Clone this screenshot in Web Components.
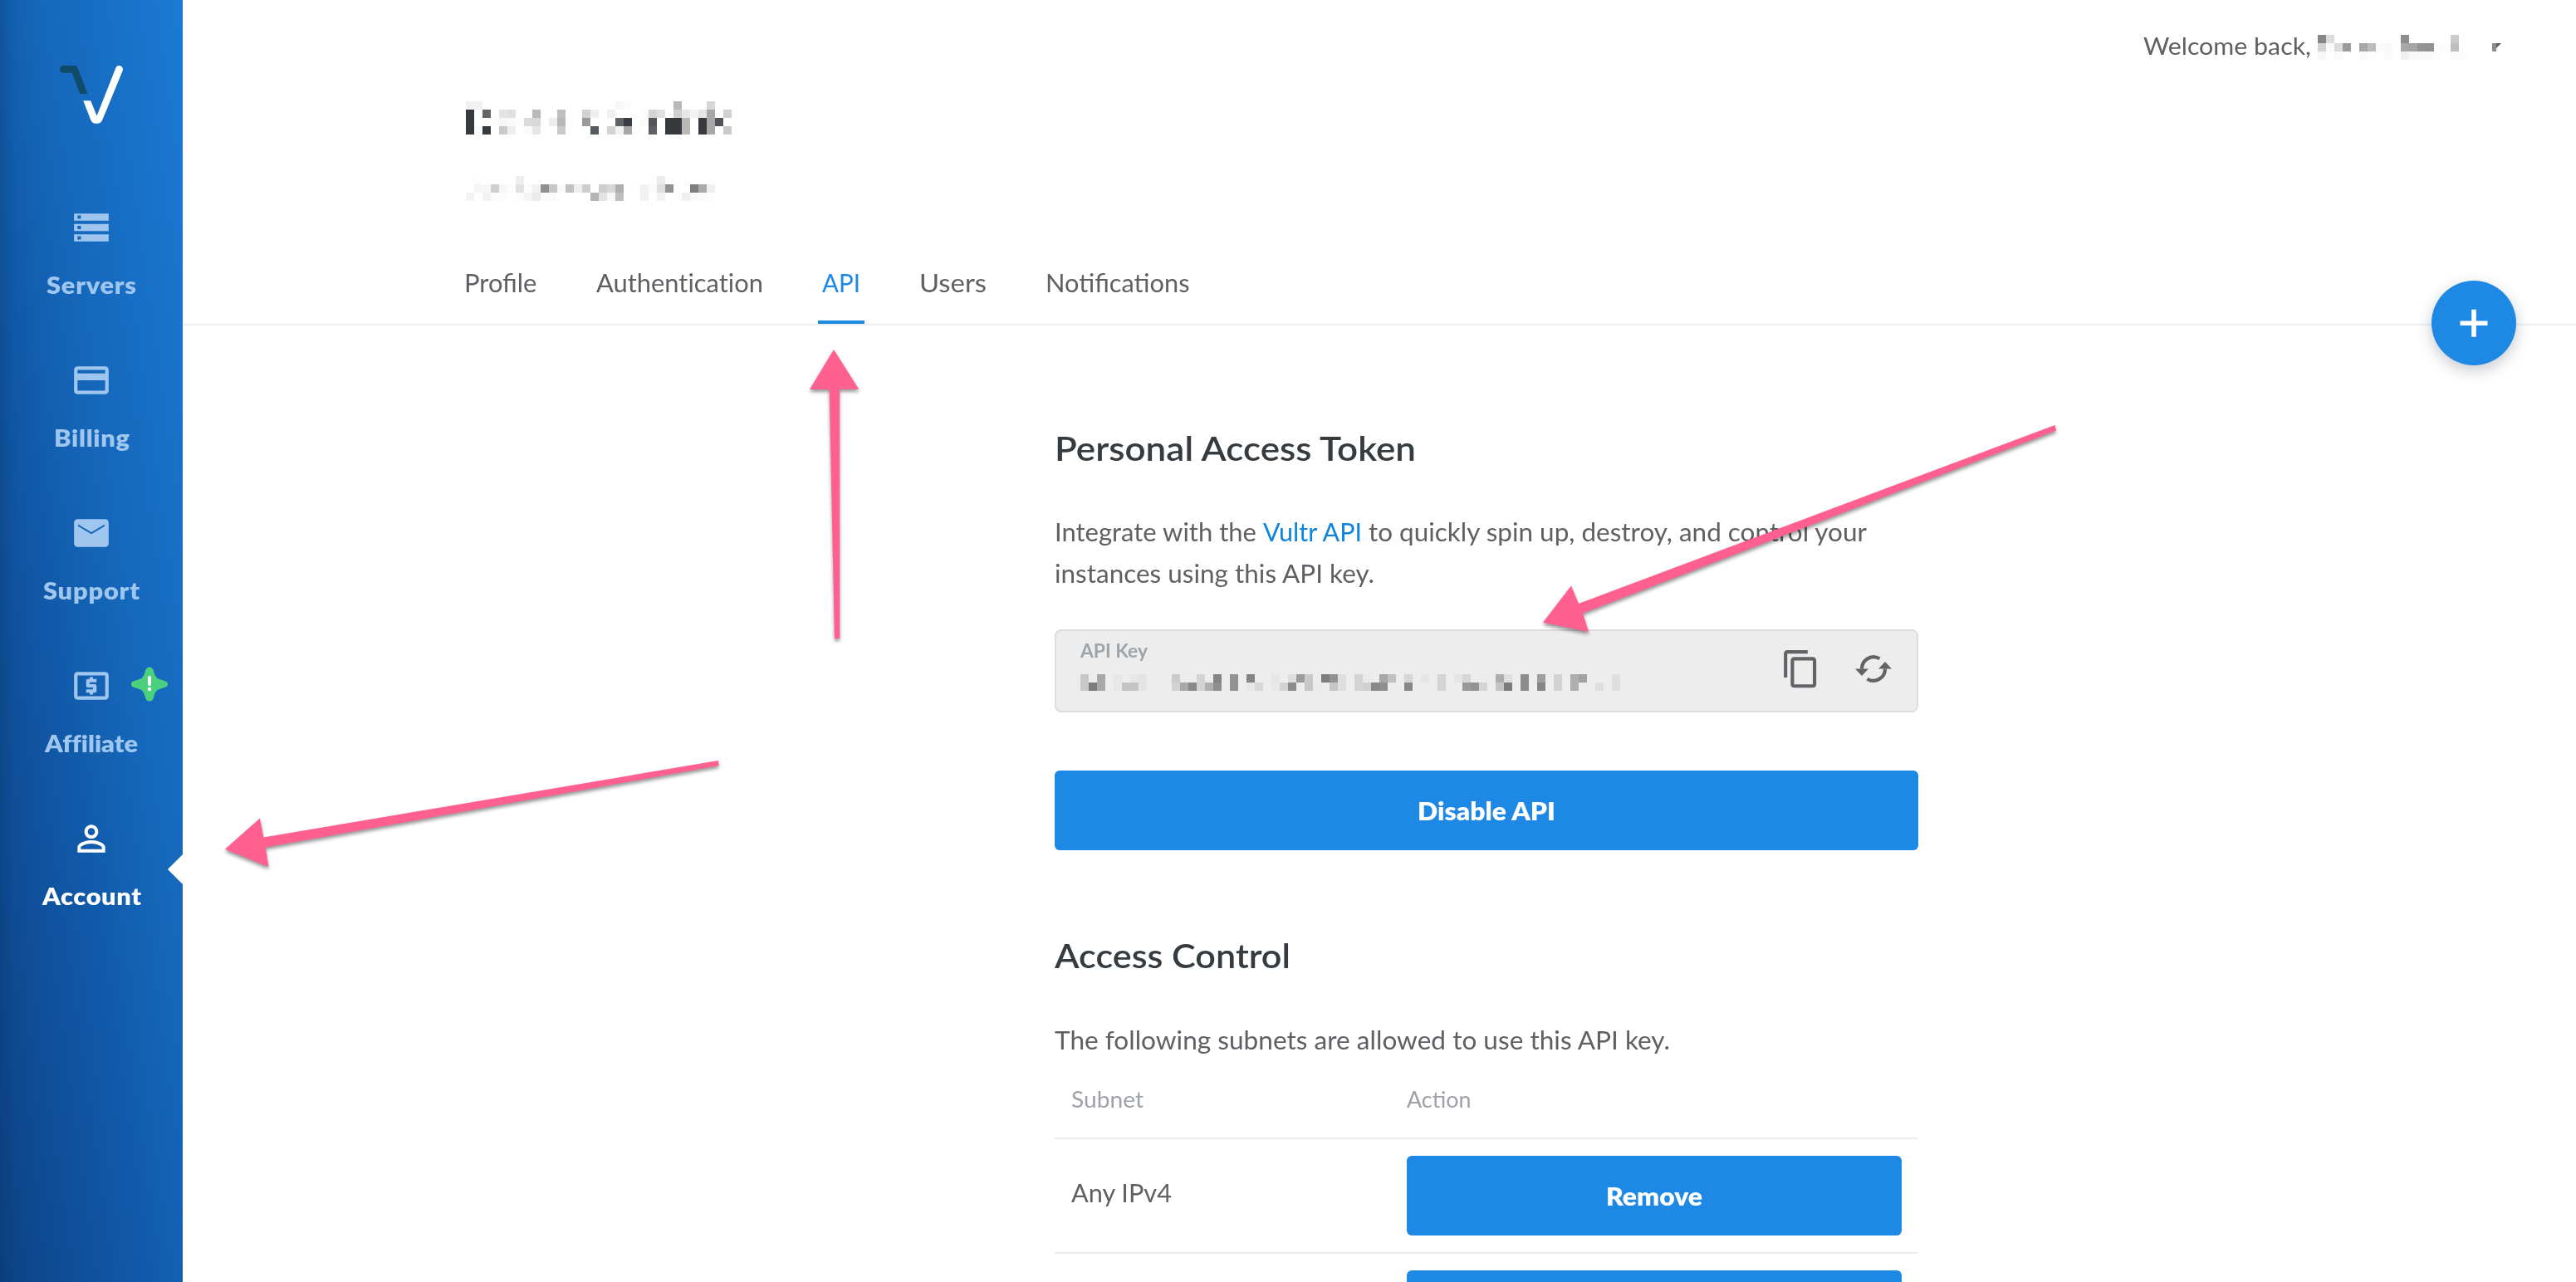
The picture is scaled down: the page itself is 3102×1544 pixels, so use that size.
<!DOCTYPE html>
<html lang="en">
<head>
<meta charset="utf-8">
<title>Account - API</title>
<style>
html,body{margin:0;height:100%;overflow:hidden;background:#fff}
body{font-family:Lato,"Open Sans",sans-serif;color:#5f6064}
</style>
</head>
<body>
<app-shell></app-shell>
<script>
const define = (name, html, ready) => {
  const tpl = document.createElement('template');
  tpl.innerHTML = html;
  customElements.define(name, class extends HTMLElement {
    connectedCallback() {
      if (this.shadowRoot) return;
      this.attachShadow({mode: 'open'}).append(tpl.content.cloneNode(true));
      if (ready) ready(this, this.shadowRoot);
    }
  });
};

/* One line of text set to the width in the attribute w: widened a little first, then tracked. */
define('fit-text', `<style>:host{display:inline-block;white-space:nowrap}span{display:inline-block;transform-origin:0 50%}</style><span></span>`, (el, root) => {
  const s = root.querySelector('span');
  s.textContent = el.getAttribute('t');
  const w = +el.getAttribute('w'), n = s.textContent.length;
  s.style.letterSpacing = '0.001px';
  const nat = s.getBoundingClientRect().width;
  const k = Math.min(1.1, Math.max(0.95, w / nat));
  s.style.letterSpacing = (w / k - nat) / (n - 1) + 'px';
  s.style.transform = `scaleX(${k})`;
  el.style.width = w + 'px';
});

const ICONS = {
  servers: '<path d="M2 20h20v-4H2v4zm2-3h2v2H4v-2zM2 4v4h20V4H2zm4 3H4V5h2v2zm-4 7h20v-4H2v4zm2-3h2v2H4v-2z"/>',
  billing: '<path d="M20 4H4c-1.11 0-1.99.89-1.99 2L2 18c0 1.11.89 2 2 2h16c1.11 0 2-.89 2-2V6c0-1.11-.89-2-2-2zm0 14H4v-6h16v6zm0-10H4V6h16v2z"/>',
  support: '<path fill-rule="evenodd" d="M4 4h16a2 2 0 0 1 2 2v12a2 2 0 0 1-2 2H4a2 2 0 0 1-2-2V6a2 2 0 0 1 2-2zM4.3 6.9V8L12 12.600 19.700 8V6.900L12 11.500z"/>',
  affiliate: '<path d="M11 17h2v-1h1c.55 0 1-.45 1-1v-3c0-.55-.45-1-1-1h-3v-1h4V8h-2V7h-2v1h-1c-.55 0-1 .45-1 1v3c0 .55.45 1 1 1h3v1H9v2h2v1zm9-13H4c-1.11 0-1.99.89-1.99 2L2 18c0 1.11.89 2 2 2h16c1.11 0 2-.89 2-2V6c0-1.11-.89-2-2-2zm0 14H4V6h16v12z"/>',
  account: '<path d="M12 5.9c1.16 0 2.1.94 2.1 2.1s-.94 2.1-2.1 2.1S9.9 9.16 9.9 8s.94-2.1 2.1-2.1m0 9c2.97 0 6.1 1.46 6.1 2.1v1.1H5.9V17c0-.64 3.13-2.1 6.1-2.1M12 4C9.79 4 8 5.79 8 8s1.79 4 4 4 4-1.79 4-4-1.79-4-4-4zm0 9c-2.67 0-8 1.34-8 4v3h16v-3c0-2.66-5.33-4-8-4z"/>',
  copy: '<path d="M16 1H4c-1.1 0-2 .9-2 2v14h2V3h12V1zm3 4H8c-1.100 0-2 .9-2 2v14c0 1.100.9 2 2 2h11c1.100 0 2-.9 2-2V7c0-1.100-.9-2-2-2zm0 16H8V7h11v14z"/>'
};
define('ui-icon', `<style>:host{display:block;flex:none}svg{display:block;width:100%;height:100%;fill:currentColor}</style><svg viewBox="0 0 24 24"></svg>`, (el, root) => {
  root.querySelector('svg').innerHTML = ICONS[el.getAttribute('name')];
});

/* Pixelated redaction block: rows split by "/", cells written as column:gray. */
define('pixel-mask', `<style>:host{display:block;flex:none}svg{display:block}</style>`, (el, root) => {
  const cols = +el.getAttribute('cols'), rows = el.getAttribute('data').split('/');
  let out = '';
  rows.forEach((r, y) => r.trim().split(/\s+/).filter(Boolean).forEach(c => {
    const [x, h] = c.split(':'), v = parseInt(h, 16), k = v < 96 ? 1 : 0;
    out += `<rect x="${x * 10}" y="${y * 10}" width="10" height="10" fill="rgb(${v},${v + 4 * k},${v + 9 * k})"/>`;
  }));
  root.innerHTML += `<svg width="${cols * 10}" height="${rows.length * 10}" shape-rendering="crispEdges">${out}</svg>`;
});

define('nav-item', `<style>
:host{display:flex;flex-direction:column;align-items:center;height:184px;position:relative;color:#9fc6ee;font-size:28px;font-weight:800;line-height:34px}
:host([active]){color:#fff}
.icon{width:50px;height:50px;margin-bottom:27px}
.tip{display:none;position:absolute;right:0;top:44px}
:host([active]) .tip{display:block}
.badge{display:none;position:absolute;left:158px;top:1px}
:host([badge]) .badge{display:block}
</style><slot name="icon"></slot><slot></slot>
<svg class="tip" width="18" height="36"><path d="M18 0V36L0 18z" fill="#fff"/></svg>
<svg class="badge" width="44" height="44" viewBox="0 0 44 44"><path fill="#4bd07d" d="M22 1.500c3 0 4.500 2 5.200 5 1.200 5 2.800 8.500 8 10C40 17.800 44 18.500 44 22s-4 4.200-8.800 5.500c-5.200 1.500-6.800 5-8 10-.7 3-2.200 5-5.200 5s-4.500-2-5.200-5c-1.200-5-2.800-8.500-8-10C4 26.200 0 25.500 0 22s4-4.200 8.800-5.500c5.200-1.500 6.800-5 8-10 .7-3 2.200-5 5.200-5z"/><rect x="20" y="12" width="4" height="12" rx="2" fill="#fff"/><circle cx="22" cy="28" r="2.200" fill="#fff"/></svg>`);

define('side-bar', `<style>
:host{display:flex;flex-direction:column;flex:none;width:220px;height:1544px;background:linear-gradient(90deg,rgba(8,50,100,.26),rgba(8,50,100,.06) 18px,rgba(8,50,100,0) 50px),linear-gradient(to bottom left,#1b7ad4 0,#1566b9 42%,#115aaa 60%,#0d4285 100%)}
.logo{height:249px;flex:none}
.logo svg{display:block}
ui-icon{width:50px;height:50px;margin-bottom:27px}
</style>
<div class="logo"><svg width="220" height="249"><path fill="#124a69" d="M76.300 79H89c2.600 0 3.900 1.200 5 3.700L105.300 113H96.400L86.600 87.700H76.300a4.350 4.350 0 0 1 0-8.700z"/><path fill="#fff" d="M100.200 121.300h9L116.600 139.500 139.500 81.500c2.500-4.800 9.800-1.800 8.300 3.400L123.700 143.500c-1.600 3.700-3.200 5.300-6.300 5.300h-2.200c-3.100 0-4.900-1.600-6.300-5.300z"/></svg></div>
<nav-item><ui-icon slot="icon" name="servers"></ui-icon><fit-text t="Servers" w="108"></fit-text></nav-item>
<nav-item><ui-icon slot="icon" name="billing"></ui-icon><fit-text t="Billing" w="91"></fit-text></nav-item>
<nav-item><ui-icon slot="icon" name="support"></ui-icon><fit-text t="Support" w="116"></fit-text></nav-item>
<nav-item badge><ui-icon slot="icon" name="affiliate"></ui-icon><fit-text t="Affiliate" w="112"></fit-text></nav-item>
<nav-item active><ui-icon slot="icon" name="account"></ui-icon><fit-text t="Account" w="119"></fit-text></nav-item>`);

define('top-bar', `<style>
:host{display:flex;justify-content:flex-end;height:122px;box-sizing:border-box;padding:37px 90px 0 0;font-size:28px;line-height:36px}
pixel-mask{margin:5px 30px 0 8px}
svg{margin-top:15px}
</style><fit-text t="Welcome back," w="202"></fit-text>
<pixel-mask cols="18" data="0:86 1:dd 10:8e 16:cb/0:d3 1:fa 2:db 3:9b 5:a7 6:bd 7:fb 8:f9 10:a9 11:a5 12:94 13:92 14:fb 15:fc 16:bf/0:f7 2:fb 5:fa 6:fc 8:fa 10:f0 11:f9 12:f9 13:f9 14:fd 16:fa 17:fc"></pixel-mask>
<svg width="11" height="10"><path fill="#8c8c8e" d="M0 0h5v10H0z"/><path fill="#5f6064" d="M5 0h6L5 6z"/></svg>`);

define('tab-item', `<style>
:host{display:block;height:70px;box-sizing:border-box;padding:0 5px;font-size:30px;line-height:40px}
:host([active]){color:#1e88e5;border-bottom:4px solid #1e88e5}
</style><slot></slot>`);

define('page-header', `<style>
:host{display:flex;flex-direction:column;height:270px;box-sizing:border-box;border-bottom:2px solid #eaeff3;padding-left:341px;position:relative}
.sub{margin-top:50px}
nav{display:flex;gap:61px;margin:78px 0 0 -7px}
.fab{position:absolute;right:72px;top:216px;width:102px;height:102px;border-radius:50%;background:#1e88e5;box-shadow:0 6px 18px rgba(50,60,80,.28)}
.fab svg{display:block}
</style>
<pixel-mask cols="32" data="0:f1 1:f1 18:f7 19:fc 25:b9 29:d7/0:36 2:66 4:e4 5:e0 8:b9 11:bf 14:d2 15:f0 17:f0 21:fc 22:d4 23:df 25:cf 26:e7 27:f2 28:e6 29:a7 31:d1/0:36 2:fc 3:fc 4:f7 5:fa 6:fd 7:da 8:d8 10:ed 11:b8 12:fd 14:9b 18:5f 19:38 21:fb 22:52 24:36 25:36 26:b8 28:36 29:a7 30:50/0:36 1:fa 2:36 4:ca 5:ee 7:fa 8:e6 11:c9 14:fd 15:56 17:d3 18:f2 19:a7 20:fc 22:5c 24:36 25:36 26:b8 28:36 29:a7 31:ca"></pixel-mask>
<pixel-mask class="sub" cols="30" data="1:fd 6:ee 22:fd 23:ec/1:f6 2:f6 3:cf 4:f7 5:fc 6:e2 7:fc 8:f2 9:8f 10:c7 11:f9 12:c0 13:ee 14:ce 16:ce 17:d8 18:af 20:fd 21:f1 22:fa 23:de 24:92 25:fc 27:7e 28:aa 29:f0/0:f4 2:f3 3:fb 4:fc 6:fb 7:f5 8:eb 9:fb 10:fb 15:b4 16:e3 17:f8 18:be 21:f1 23:f1 25:fc 26:ef 27:f9 28:fb 29:fd"></pixel-mask>
<nav>
<tab-item><fit-text t="Profile" w="88"></fit-text></tab-item>
<tab-item><fit-text t="Authentication" w="201"></fit-text></tab-item>
<tab-item active><fit-text t="API" w="46"></fit-text></tab-item>
<tab-item><fit-text t="Users" w="81"></fit-text></tab-item>
<tab-item><fit-text t="Notifications" w="173"></fit-text></tab-item>
</nav>
<div class="fab"><svg width="102" height="102"><path d="M34.500 51.200h33M51 34.700v33" stroke="#fff" stroke-width="5.600"/></svg></div>`);

define('ui-button', `<style>
:host{display:flex;align-items:center;justify-content:center;height:96px;border-radius:6px;background:#1e88e5;color:#fff;font-size:30px;font-weight:800}
</style><slot></slot>`);

define('section-title', `<style>:host{display:block;height:48px;font-size:40px;line-height:50px;font-weight:600;color:#363b40}</style><slot></slot>`);

define('key-field', `<style>
:host{display:flex;height:100px;box-sizing:border-box;border:2px solid #dcdcdc;border-radius:8px;background:#ededed;padding:0 30px 0 29px}
.l{display:flex;flex-direction:column;flex:1;font-size:22px;line-height:26px;font-weight:700;color:#9ea4a8;padding-top:11px}
pixel-mask{margin-top:15px}
ui-icon{width:49.300px;height:49.300px;margin:21px 41px 0 0;color:#626367}
.r{margin-top:25px}
</style>
<div class="l"><fit-text t="API Key" w="81"></fit-text>
<pixel-mask cols="65" data="0:c8 2:a8 4:e7 6:e7 7:e4 11:cc 14:d3 16:84 18:92 20:85 23:e6 25:df 26:9c 27:ca 29:7e 30:92 31:df 33:d4 34:ea 36:a7 37:c0 39:d7 41:e6 43:d4 45:e5 46:d7 50:ad 51:df 53:8d 55:9e 57:d3 59:af 60:a2 64:df/0:c8 1:7c 2:a8 4:e8 5:c5 6:c5 7:e4 11:d3 12:a8 13:89 14:d3 15:b0 16:8e 18:92 20:e7 21:d7 23:e8 24:d3 25:8c 27:c7 28:eb 30:c6 31:df 33:d4 34:d0 35:87 36:8e 39:88 43:d4 46:98 47:93 48:d4 50:c4 51:7c 53:8d 55:86 57:d3 59:af 62:df 64:df"></pixel-mask></div>
<ui-icon name="copy"></ui-icon>
<svg class="r" width="44" height="40" viewBox="0 0 44 40"><g fill="none" stroke="#626367" stroke-width="4.200"><path d="M8 20.500A14.200 14.200 0 0 1 29.500 8.200"/><path d="M36 20.500A14.200 14.200 0 0 1 14.500 32.800"/></g><path fill="#626367" d="M0 20.500h16l-8 8.500zM44 20.500H28l8-8.500z"/></svg>`);

define('subnet-table', `<style>
:host{display:block}
.row{display:grid;grid-template-columns:404px 1fr;padding:20px 20px;border-bottom:2px solid #ecedf2;font-size:30px;line-height:89px}
.head{padding:0 20px 27px;font-size:26px;line-height:37px;color:#9ea1a6}
.row>ui-button{line-height:36px}
</style>
<div class="row head"><fit-text t="Subnet" w="87"></fit-text><fit-text t="Action" w="77"></fit-text></div>
<div class="row"><fit-text t="Any IPv4" w="121"></fit-text><ui-button><fit-text t="Remove" w="116"></fit-text></ui-button></div>
<div class="row"><span></span><ui-button></ui-button></div>`);

define('api-page', `<style>
:host{display:block;width:1040px;margin:123px 0 0 1050px;font-size:30px;line-height:50px}
p{margin:52px 0 43px;display:flex;flex-direction:column;align-items:flex-start}
.line{display:flex;height:50px;gap:8px}
a{color:#0c84e0}
.main{margin:70px 0 102px}
.note{margin:53px 0 29px}
</style>
<section-title><fit-text t="Personal Access Token" w="435"></fit-text></section-title>
<p><span class="line"><fit-text t="Integrate with the" w="243"></fit-text><a><fit-text t="Vultr API" w="119"></fit-text></a><fit-text t="to quickly spin up, destroy, and control your" w="600"></fit-text></span>
<span class="line"><fit-text t="instances using this API key." w="385"></fit-text></span></p>
<key-field></key-field>
<ui-button class="main"><fit-text t="Disable API" w="166"></fit-text></ui-button>
<section-title><fit-text t="Access Control" w="284"></fit-text></section-title>
<p class="note"><span class="line"><fit-text t="The following subnets are allowed to use this API key." w="741"></fit-text></span></p>
<subnet-table></subnet-table>`);

/* Free-hand pointers laid over the page. */
define('arrow-layer', `<style>:host{display:block;position:absolute;left:0;top:0;pointer-events:none}svg{display:block}
path{fill:#ff6090;filter:drop-shadow(0 3px 2px rgba(0,0,0,.42))}</style>
<svg width="3102" height="1544">
<path d="M1004 421L1034.300 468.800H1011L1011.200 769H1005L998.700 469H975z"/>
<path d="M271 1022.700L313 985.500 317.300 1008.500 865 916 865.700 922 319.700 1020.500 323.500 1044z"/>
<path d="M1858 749.700L1892 705.500 1901 727 2474.500 512 2476 518.500 1906 738.500 1913 761z"/>
</svg>`);

define('app-shell', `<style>
:host{display:flex;width:3102px;height:1544px;overflow:hidden;position:relative;background:#fff}
main{flex:1;min-width:0;display:flex;flex-direction:column}
top-bar,page-header{flex:none}
</style><side-bar></side-bar><main><top-bar></top-bar><page-header></page-header><api-page></api-page></main><arrow-layer></arrow-layer>`);
</script>
</body>
</html>
